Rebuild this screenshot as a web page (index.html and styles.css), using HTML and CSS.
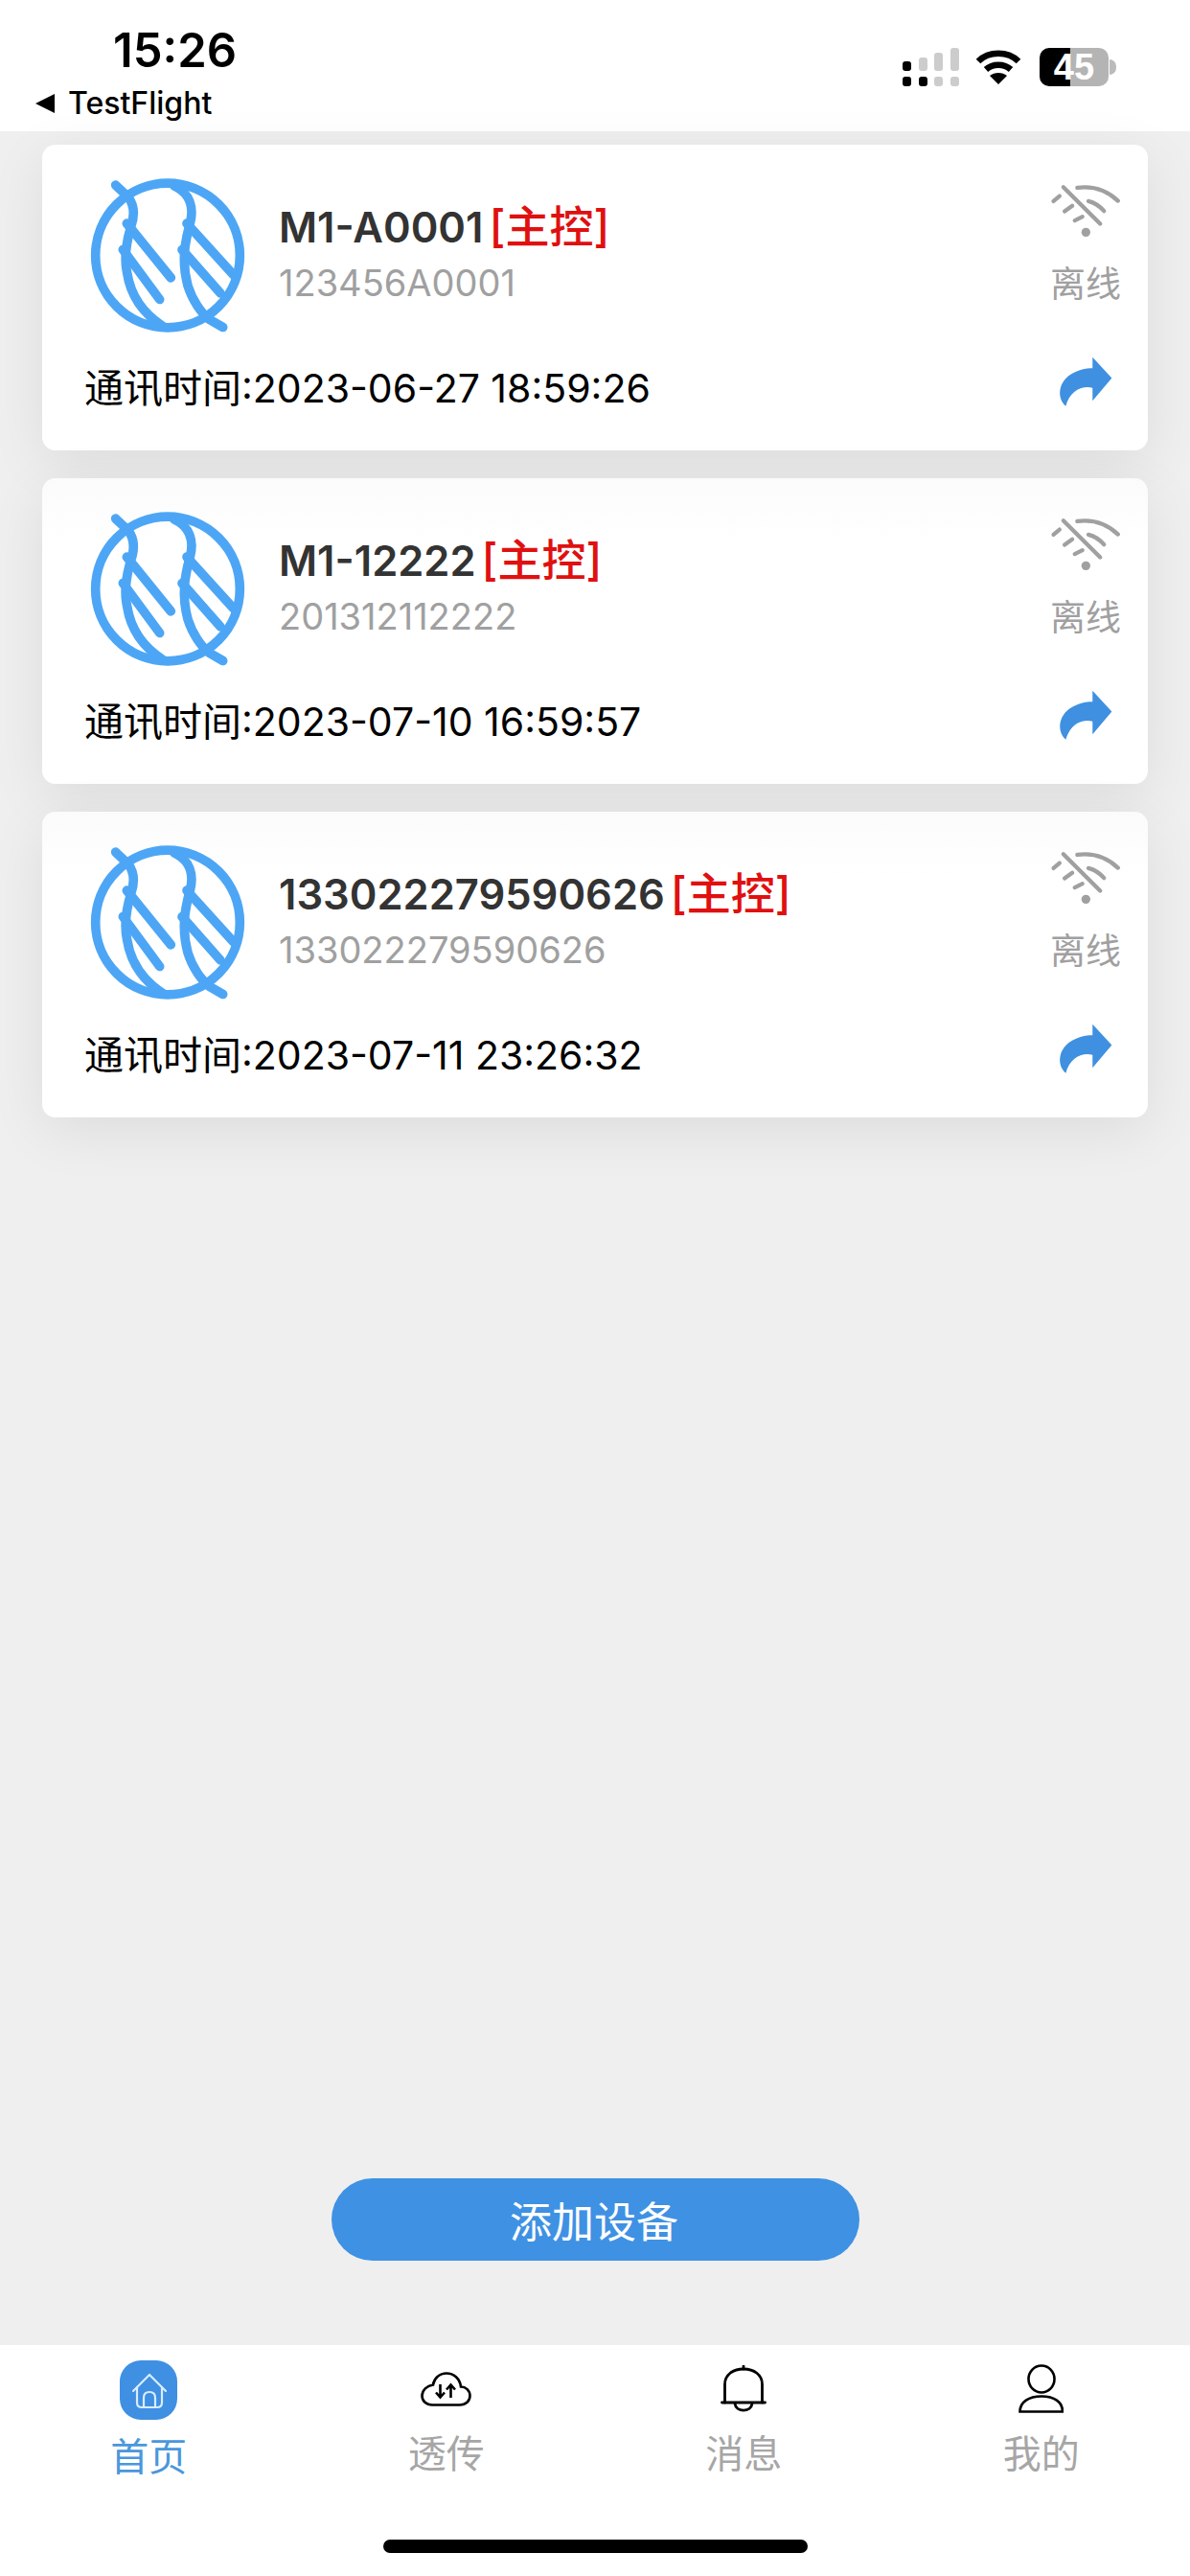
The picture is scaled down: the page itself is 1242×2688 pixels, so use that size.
FILE: index.html
```html
<!DOCTYPE html>
<html lang="zh-CN">
<head>
    <meta charset="UTF-8">
    <meta name="viewport" content="width=device-width, initial-scale=1.0">
    <title>设备列表</title>
    <link rel="stylesheet" href="styles.css">
</head>
<body>
    <svg class="defs" width="0" height="0">
        <symbol id="logo" viewBox="60 40 510 500">
            <g fill="none" stroke="#4da6f5" stroke-width="29" stroke-linecap="round">
                <circle cx="315" cy="290" r="226"/>
                <path d="M152 70 L192 108 C212 135 212 165 200 200 C185 250 178 300 188 345 C198 410 235 470 300 512"/>
                <path d="M335 72 C385 95 398 140 385 190 C368 250 358 310 378 385 C392 430 420 470 445 490 L488 515"/>
                <path d="M187 190 L325 360"/>
                <path d="M175 272 L290 428"/>
                <path d="M375 190 L520 350"/>
                <path d="M360 272 L480 408"/>
            </g>
        </symbol>
        <symbol id="wifi-off" viewBox="105 60 225 175">
            <g fill="none" stroke="#a0a0a0" stroke-width="13" stroke-linecap="round">
                <path d="M115 117 L134 101"/>
                <path d="M190 75 C240 68 285 85 318 116"/>
                <path d="M150 149 L174 132"/>
                <path d="M225 117 C245 122 260 132 274 148"/>
                <path d="M182 178 L206 166"/>
                <path d="M146 73 L262 188"/>
            </g>
            <circle cx="217" cy="215" r="14" fill="#a0a0a0"/>
        </symbol>
        <symbol id="share" viewBox="120 600 185 165">
            <path fill="#3f90e0" d="M238 605 L300 672 L238 745 L238 703 C200 695 165 715 152 762 C125 740 125 690 165 662 C190 645 215 640 238 640 Z"/>
        </symbol>
    </svg>

    <div class="status-bar">
        <div class="status-left">
            <div class="clock">15:26</div>
            <div class="back-app"><span class="back-arrow"></span>TestFlight</div>
        </div>
        <div class="status-right">
            <div class="signal">
                <div class="sim-top">
                    <i class="on h1"></i><i class="h2"></i><i class="h3"></i><i class="h4"></i>
                </div>
                <div class="sim-bottom">
                    <i class="on"></i><i class="on"></i><i></i><i></i>
                </div>
            </div>
            <svg class="wifi" width="48" height="36" viewBox="0 0 48 36">
                <path d="M3 12 C14 1 34 1 45 12" fill="none" stroke="#000" stroke-width="6.5"/>
                <path d="M11 20.5 C18 14 30 14 37 20.5" fill="none" stroke="#000" stroke-width="6.5"/>
                <path d="M24 36 L15 27 C20 23 28 23 33 27 Z" fill="#000"/>
            </svg>
            <div class="battery"><span class="battery-num">45</span></div>
            <div class="battery-nub"></div>
        </div>
    </div>

    <div class="main">
        <div class="card">
            <div class="card-top">
                <svg class="logo"><use href="#logo"/></svg>
                <div class="info">
                    <div class="name">M1-A0001<span class="tag">[主控]</span></div>
                    <div class="serial">123456A0001</div>
                </div>
                <div class="state">
                    <svg class="wifi-off"><use href="#wifi-off"/></svg>
                    <div class="state-text">离线</div>
                </div>
            </div>
            <div class="card-bottom">
                <div class="time">通讯时间:2023-06-27 18:59:26</div>
                <svg class="share"><use href="#share"/></svg>
            </div>
        </div>
        <div class="card">
            <div class="card-top">
                <svg class="logo"><use href="#logo"/></svg>
                <div class="info">
                    <div class="name">M1-12222<span class="tag">[主控]</span></div>
                    <div class="serial">201312112222</div>
                </div>
                <div class="state">
                    <svg class="wifi-off"><use href="#wifi-off"/></svg>
                    <div class="state-text">离线</div>
                </div>
            </div>
            <div class="card-bottom">
                <div class="time">通讯时间:2023-07-10 16:59:57</div>
                <svg class="share"><use href="#share"/></svg>
            </div>
        </div>
        <div class="card">
            <div class="card-top">
                <svg class="logo"><use href="#logo"/></svg>
                <div class="info">
                    <div class="name">133022279590626<span class="tag">[主控]</span></div>
                    <div class="serial">133022279590626</div>
                </div>
                <div class="state">
                    <svg class="wifi-off"><use href="#wifi-off"/></svg>
                    <div class="state-text">离线</div>
                </div>
            </div>
            <div class="card-bottom">
                <div class="time">通讯时间:2023-07-11 23:26:32</div>
                <svg class="share"><use href="#share"/></svg>
            </div>
        </div>
        <button class="add-btn">添加设备</button>
    </div>

    <div class="tab-bar">
        <div class="tab active">
            <div class="tab-icon">
                <div class="home-box">
                    <svg width="60" height="62" viewBox="0 0 60 62" fill="none" stroke="#d8edff" stroke-width="2.2" stroke-linecap="round" stroke-linejoin="round">
                        <path d="M14 32 L31 15 L48 32"/>
                        <path d="M18 28 V44 Q18 49 23 49 H39 Q44 49 44 44 V28"/>
                        <path d="M25 49 V39 Q25 33 31 33 Q37 33 37 39 V49"/>
                    </svg>
                </div>
            </div>
            <div class="tab-text">首页</div>
        </div>
        <div class="tab">
            <div class="tab-icon">
                <svg class="cloud" width="53" height="36" viewBox="0 0 53 36" fill="none" stroke="#000" stroke-width="2.6">
                    <path d="M12 34.5 H41 C47 34.5 51.5 30.5 51.5 25 C51.5 19.5 47 15.5 42 15.5 C41 7 34.5 1.5 27 1.5 C19.5 1.5 14 7 13 13.5 C6.5 14.5 1.5 19 1.5 25 C1.5 30.5 6 34.5 12 34.5 Z"/>
                    <path d="M20.5 13 V26 M16 21.5 L20.5 26.5 L25 21.5"/>
                    <path d="M31.5 27 V14 M27 18.5 L31.5 13.5 L36 18.5"/>
                </svg>
            </div>
            <div class="tab-text">透传</div>
        </div>
        <div class="tab">
            <div class="tab-icon">
                <svg class="bell" width="48" height="49" viewBox="0 0 48 49" fill="none" stroke="#000" stroke-width="2.8" stroke-linecap="round">
                    <path d="M4.5 39 V20 C4.5 10 13 4 24 4 C35 4 43.5 10 43.5 20 V39"/>
                    <path d="M1.5 39 H46.5"/>
                    <path d="M15 40 C16 49.5 32 49.5 33 40"/>
                    <path d="M24 1 V4"/>
                </svg>
            </div>
            <div class="tab-text">消息</div>
        </div>
        <div class="tab">
            <div class="tab-icon">
                <svg class="person" width="47" height="51" viewBox="0 0 47 51" fill="none" stroke="#000" stroke-width="2.6">
                    <ellipse cx="24" cy="15.5" rx="13.5" ry="14"/>
                    <path d="M1.5 49.5 H46 C46 39 37 33.5 24 33.5 C11 33.5 1.5 39 1.5 49.5 Z"/>
                </svg>
            </div>
            <div class="tab-text">我的</div>
        </div>
        <div class="home-indicator"></div>
    </div>
</body>
</html>
```
FILE: styles.css
```css
* {
    box-sizing: border-box;
}
html, body {
    margin: 0;
    padding: 0;
}
body {
    width: 1242px;
    height: 2688px;
    display: flex;
    flex-direction: column;
    overflow: hidden;
    background-color: #efefef;
    font-family: Inter, "Noto Sans CJK SC", sans-serif;
    color: #000;
}
.defs {
    position: absolute;
}

/* status bar */
.status-bar {
    height: 137px;
    background-color: #fff;
    display: flex;
    justify-content: space-between;
    flex-shrink: 0;
}
.status-left {
    padding: 26px 0 0 37px;
}
.clock {
    margin-left: 81px;
    font-size: 49px;
    line-height: 54px;
    font-weight: 600;
}
.back-app {
    display: flex;
    align-items: center;
    margin-top: 8px;
    font-size: 32px;
    line-height: 40px;
    font-weight: 500;
}
.back-arrow {
    width: 0;
    height: 0;
    margin-right: 14px;
    border-top: 10px solid transparent;
    border-bottom: 10px solid transparent;
    border-right: 20px solid #000;
}
.status-right {
    display: flex;
    align-items: flex-start;
    padding: 50px 77px 0 0;
}
.signal {
    width: 59px;
    height: 40px;
    display: flex;
    flex-direction: column;
    justify-content: space-between;
    margin-right: 17px;
}
.sim-top, .sim-bottom {
    display: flex;
    justify-content: space-between;
    align-items: flex-end;
}
.signal i {
    display: block;
    width: 9px;
    height: 10px;
    border-radius: 3px;
    background-color: #ccc;
}
.signal i.h1 { height: 10px; }
.signal i.h2 { height: 14px; }
.signal i.h3 { height: 19px; }
.signal i.h4 { height: 24px; }
.signal i.on {
    background-color: #000;
}
.wifi {
    margin-top: 2px;
    margin-right: 19px;
}
.battery {
    width: 72px;
    height: 40px;
    border-radius: 10px;
    background: linear-gradient(to right, #000 32px, #b4b4b4 32px);
    color: #fff;
    font-family: "Liberation Sans", sans-serif;
    font-size: 38px;
    font-weight: 700;
    line-height: 40px;
    text-align: center;
}
.battery-nub {
    width: 7px;
    height: 16px;
    margin: 12px 0 0 1px;
    border-radius: 0 8px 8px 0;
    background-color: #bbb;
}

/* list */
.main {
    flex: 1;
    display: flex;
    flex-direction: column;
    gap: 29px;
    padding: 14px 44px 88px;
}
.card {
    height: 319px;
    flex-shrink: 0;
    padding: 32px 28px 0 44px;
    background-color: #fff;
    border-radius: 14px;
    box-shadow: 0 14px 60px rgba(0, 0, 0, 0.08);
}
.card + .card {
    background: linear-gradient(#fbfbfb, #fff 70px);
}
.card-top {
    display: flex;
    align-items: flex-start;
    height: 193px;
}
.logo {
    width: 170px;
    height: 167px;
    margin-left: 2px;
    flex-shrink: 0;
}
.info {
    flex: 1;
    margin: 25px 0 0 31px;
}
.name {
    font-size: 43.5px;
    line-height: 56px;
    font-weight: 600;
    color: #333;
}
.tag {
    margin-left: 6px;
    font-size: 46px;
    font-weight: 500;
    color: #e01010;
}
.serial {
    margin-top: 6px;
    font-size: 38px;
    line-height: 48px;
    color: #a0a0a0;
}
.state {
    width: 74px;
    margin-top: 8px;
    text-align: center;
}
.wifi-off {
    display: block;
    width: 75px;
    height: 58px;
}
.state-text {
    margin-top: 26px;
    font-size: 37px;
    line-height: 44px;
    color: #a0a0a0;
}
.card-bottom {
    display: flex;
    justify-content: space-between;
    align-items: center;
    height: 58px;
}
.time {
    font-size: 41px;
    line-height: 58px;
}
.share {
    width: 60px;
    height: 54px;
    margin-right: 8px;
    margin-bottom: 14px;
}
.add-btn {
    width: 551px;
    height: 86px;
    margin: auto 0 0 302px;
    padding: 0 3px 0 0;
    border: none;
    border-radius: 43px;
    background-color: #3f91e3;
    color: #fff;
    font-family: inherit;
    font-size: 44px;
}

/* tab bar */
.tab-bar {
    height: 241px;
    flex-shrink: 0;
    background-color: #fff;
    display: grid;
    grid-template-columns: repeat(4, 1fr);
    grid-template-rows: 136px 1fr;
}
.tab {
    display: flex;
    flex-direction: column;
    align-items: center;
    padding-top: 16px;
}
.tab-icon {
    height: 62px;
    display: flex;
    align-items: center;
    justify-content: center;
}
.home-box {
    width: 60px;
    height: 62px;
    border-radius: 22px;
    background-color: #3f8fe3;
}
.home-box svg {
    display: block;
}
.tab-text {
    margin-top: 17px;
    font-size: 40px;
    line-height: 44px;
    color: #a6a6a6;
}
.tab.active .tab-text {
    color: #4a97dc;
}
.home-indicator {
    grid-column: 1 / -1;
    justify-self: center;
    width: 443px;
    height: 14px;
    margin-top: 67px;
    border-radius: 7px;
    background-color: #000;
}
```
